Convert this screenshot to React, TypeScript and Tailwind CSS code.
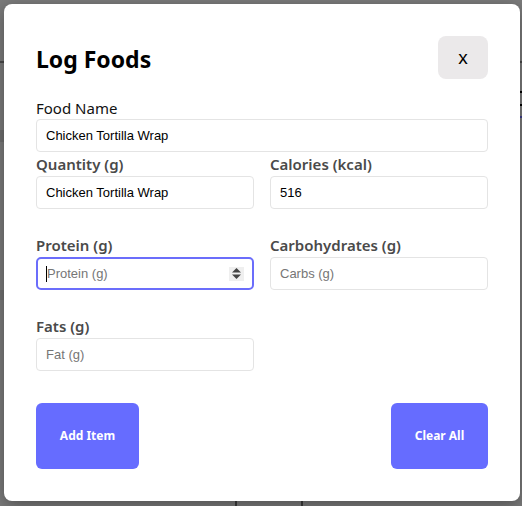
const label = "block text-[15px] leading-6 font-semibold text-[#4a4a4a]";
const input =
  "w-full h-[33px] rounded border border-[#e4e4e4] bg-white px-[9px] text-[13px] text-black outline-none placeholder:text-[#767676] [font-family:'Liberation_Sans',Arial,sans-serif]";

function Field({ name, value, placeholder }: { name: string; value?: string; placeholder?: string }) {
  return (
    <div>
      <label className={label}>{name}</label>
      <input className={input} defaultValue={value} placeholder={placeholder} readOnly />
    </div>
  );
}

export default function App() {
  return (
    <div className="relative w-[522px] h-[506px] overflow-hidden bg-[#7b7b7b] [font-family:'Noto_Sans',sans-serif]">
      {/* page behind the overlay */}
      <div className="absolute left-0 top-[61px] h-[2px] w-[6px] bg-[#4a4a4a]" />
      <div className="absolute left-0 top-[130px] h-[12px] w-[6px] bg-[#6f6f6f]" />
      <div className="absolute left-0 top-[290px] h-[10px] w-[6px] bg-[#707070]" />
      <div className="absolute right-0 top-[61px] h-[2px] w-[6px] bg-[#4a4a4a]" />
      <div className="absolute right-0 top-[91px] h-[2px] w-[4px] bg-black" />
      <div className="absolute right-0 top-[104px] h-[2px] w-[4px] bg-black" />
      <div className="absolute right-0 top-[116px] h-[2px] w-[4px] bg-[#3f3d8a]" />
      <div className="absolute left-[235px] bottom-0 h-[6px] w-[2px] bg-[#3a3a3a]" />
      <div className="absolute left-[301px] bottom-0 h-[6px] w-[2px] bg-[#3a3a3a]" />

      <div className="relative p-1">
        <div className="w-[516px] h-[497px] rounded-lg bg-white p-8 shadow-[0_4px_16px_rgba(0,0,0,0.35)] flex flex-col">
          <div className="flex items-center justify-between">
            <h1 className="pt-[4px] text-[23px] font-bold text-black">Log Foods</h1>
            <button className="h-[43px] w-[50px] rounded-lg bg-[#ebe9ea] text-[19px] leading-none text-black [font-family:'Liberation_Sans',Arial,sans-serif]">
              x
            </button>
          </div>

          <div className="mt-[18px]">
            <label className="block text-[15px] leading-[22px] text-[#111]">Food Name</label>
            <input className={input} defaultValue="Chicken Tortilla Wrap" readOnly />
          </div>

          <div className="grid grid-cols-2 gap-x-4">
            <Field name="Quantity (g)" value="Chicken Tortilla Wrap" />
            <Field name="Calories (kcal)" value="516" />
          </div>

          <div className="mt-6 grid grid-cols-2 gap-x-4">
            <div>
              <label className={label}>Protein (g)</label>
              <div className="flex h-[33px] items-center rounded-[5px] border-2 border-[#6b6dfb] pl-2 pr-[8px]">
                <span className="h-4 w-px bg-black" />
                <span className="flex-1 text-[13px] text-[#767676] [font-family:'Liberation_Sans',Arial,sans-serif]">Protein (g)</span>
                <span className="flex h-[14px] w-[15px] items-center justify-center bg-[#efefef]">
                  <svg width="9" height="11" viewBox="0 0 9 11" fill="#444">
                    <path d="M4.5 0 L9 4.5 L0 4.5 Z" />
                    <path d="M0 6.5 L9 6.5 L4.5 11 Z" />
                  </svg>
                </span>
              </div>
            </div>
            <Field name="Carbohydrates (g)" placeholder="Carbs (g)" />
          </div>

          <div className="mt-6 grid grid-cols-2 gap-x-4">
            <Field name="Fats (g)" placeholder="Fat (g)" />
          </div>

          <div className="mt-8 flex justify-between">
            <button className="h-[66px] w-[103px] rounded-md bg-[#666cff] text-[12px] font-bold text-white">Add Item</button>
            <button className="h-[66px] w-[97px] rounded-md bg-[#666cff] text-[12px] font-bold text-white">Clear All</button>
          </div>
        </div>
      </div>
    </div>
  );
}
